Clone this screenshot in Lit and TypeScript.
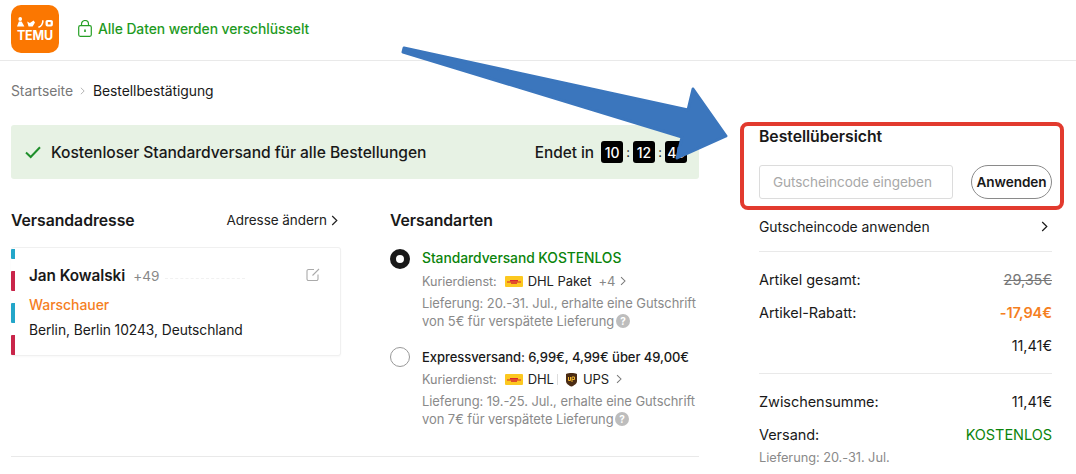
import { LitElement, html, css } from "lit";
import { customElement } from "lit/decorators.js";

const chevron = (w = 7, h = 11) => html`<svg class="chev" width=${w} height=${h} viewBox="0 0 7 11" fill="none" stroke="currentColor" stroke-width="1.2"><path d="M1.2 1 L5.8 5.5 L1.2 10"/></svg>`;

const dhl = html`<svg class="carrier" width="18" height="11" viewBox="0 0 18 11"><rect width="18" height="11" rx="1" fill="#fcc820"/><path d="M2 6 H16 M5 4.6 H13 M6 7.2 H12" stroke="#d8262c" stroke-width="1.1"/></svg>`;
const ups = html`<svg class="carrier" width="13" height="15" viewBox="0 0 13 15"><path d="M1 2 C4 .6 9 .6 12 2 V9 C12 12 9 13.4 6.5 14.6 C4 13.4 1 12 1 9 Z" fill="#4b2c14"/><path d="M3.5 5 V8.5 H5.5 V5 M7 10 V5 H9.5 V7.5 H7" fill="none" stroke="#f2b62c" stroke-width="1"/></svg>`;
const help = html`<svg class="help" width="14" height="14" viewBox="0 0 14 14"><circle cx="7" cy="7" r="7" fill="#bdbdbd"/><text x="7" y="10.6" text-anchor="middle" font-size="10" font-weight="700" font-family="Inter" fill="#fff">?</text></svg>`;

@customElement("app-root")
export class AppRoot extends LitElement {
  static styles = css`
    :host { display: block; width: 1076px; height: 474px; overflow: hidden; position: relative; background: #fff; font-family: Inter, "Liberation Sans", sans-serif; color: #191919; font-size: 14px; letter-spacing: -0.05px; }
    * { box-sizing: border-box; }
    .top { height: 61px; border-bottom: 1px solid #e9e9e9; display: flex; align-items: center; gap: 19px; padding: 0 11px 3px; }
    .logo { width: 48px; height: 48px; flex: none; display: block; }
    .secure { display: flex; align-items: center; gap: 6px; color: #1e9a1e; font-weight: 500; font-size: 13.86px; }
    .crumbs { height: 21px; margin: 19px 0 0 11px; display: flex; align-items: center; font-size: 13.9px; }
    .crumbs .home { color: #777; }
    .crumbs .sep { width: 20px; display: flex; justify-content: center; color: #aaa; }
    .main { display: grid; grid-template-columns: 688px 293px; gap: 60px; padding: 24px 0 0 11px; align-items: start; }
    .banner { height: 54px; background: #e7f2e4; border-radius: 3px; display: flex; align-items: center; padding: 0 12px 0 14px; }
    .banner .check { margin-right: 10px; }
    .banner .msg { font-size: 15.63px; font-weight: 500; flex: 1; }
    .ends { font-size: 15.4px; font-weight: 500; margin-right: 7px; }
    .digit { width: 22px; height: 22px; background: #000; color: #fff; border-radius: 3px; display: flex; align-items: center; justify-content: center; font-size: 14px; font-weight: 500; }
    .colon { width: 10px; text-align: center; font-size: 13px; }
    .cols { display: grid; grid-template-columns: 330px 309px; gap: 49px; margin-top: 29px; }
    .head { height: 24px; display: flex; justify-content: space-between; align-items: center; }
    h2 { margin: 0; font-size: 15.8px; font-weight: 600; }
    .change { display: flex; align-items: center; gap: 4px; font-size: 13.5px; color: #222; margin-right: 3px; }
    .card { margin-top: 15px; height: 109px; display: flex; border: 1px solid #f0f0f0; border-left: 0; border-radius: 3px; box-shadow: 0 1px 2px rgba(0,0,0,.03); }
    .stripes { width: 4px; margin-top: 1px; flex: none; display: flex; flex-direction: column; gap: 12px; }
    .stripes span { display: block; height: 20px; border-radius: 1px 0 0 1px; background: #c9254a; }
    .stripes span.c { background: #23a6c9; }
    .stripes span.s { height: 10px; }
    .info { flex: 1; padding: 15px 20px 0 14px; }
    .name { display: flex; align-items: center; height: 25px; }
    .name b { font-size: 15.3px; font-weight: 600; }
    .name .phone { color: #888; margin-left: 8px; font-size: 13.6px; }
    .name .blur { width: 80px; margin: 6px 0 0 6px; border-bottom: 1px dashed #f1f1f1; }
    .name .edit { margin-left: auto; margin-top: -2px; }
    .street { color: #f5801f; font-weight: 500; font-size: 14px; margin-top: 7px; height: 20px; line-height: 20px; }
    .city { font-size: 13.8px; margin-top: 5px; height: 20px; line-height: 20px; }
    .ship { display: grid; grid-template-columns: 20px 1fr; column-gap: 12px; }
    .ship.first { margin-top: 16px; }
    .ship.second { margin-top: 16px; }
    .radio { width: 20px; height: 20px; border-radius: 50%; border: 1px solid #999; margin-top: 1px; }
    .radio.on { border: 6.5px solid #191919; }
    .title { height: 20px; line-height: 20px; font-size: 13px; font-weight: 500; }
    .title.free { color: #0b840b; font-size: 13.85px; }
    .title.express { margin-top: 1px; }
    .courier { display: flex; align-items: center; height: 20px; margin-top: 3px; font-size: 12.6px; color: #888; white-space: nowrap; }
    .title.express + .courier { margin-top: 2px; }
    .courier .carrier { margin-left: 8px; }
    .courier em { font-style: normal; color: #222; margin-left: 5px; font-size: 13px; }
    .courier .more { margin-left: 7px; font-size: 13px; }
    .courier .chev { margin-left: 5px; color: #777; }
    .courier em + .chev { margin-left: 7px; }
    .courier .bar { width: 1px; height: 11px; background: #ddd; margin-left: 3px; margin-right: -1px; }
    .note { margin-top: 3px; font-size: 12.95px; line-height: 18px; color: #8a8a8a; white-space: nowrap; }
    .help { vertical-align: -2px; margin-left: -2px; }
    .rule { height: 1px; background: #e9e9e9; }
    .ship-rule { margin-top: 28px; }
    .side { padding-top: 2px; }
    .side h2 { height: 20px; line-height: 20px; }
    .coupon { display: flex; justify-content: space-between; margin-top: 18px; }
    .input { width: 194px; height: 34px; border: 1px solid #dcdcdc; border-radius: 3px; display: flex; align-items: center; padding-left: 13px; color: #a8a8a8; font-size: 13.55px; }
    .apply { width: 81px; height: 34px; border: 1px solid #8a8a8a; border-radius: 17px; display: flex; align-items: center; justify-content: center; font-weight: 600; font-size: 13.6px; }
    .row { display: flex; justify-content: space-between; align-items: center; font-size: 14.5px; height: 22px; }
    .row.link { margin-top: 16px; padding-right: 4px; font-size: 13.95px; }
    .rule.a { margin-top: 14px; }
    .row.r1 { margin-top: 16px; }
    .row.r2, .row.r3 { margin-top: 11px; }
    .row.r5 { margin-top: 11px; }
    .strike { color: #777; text-decoration: line-through; }
    .off { color: #f5801f; font-weight: 600; }
    .rule.b { margin-top: 17px; }
    .row.r4 { margin-top: 16px; }
    .green { color: #0b840b; }
    .when { font-size: 12.8px; color: #8a8a8a; margin-top: 2px; height: 22px; line-height: 22px; }
    .overlay { position: absolute; left: 0; top: 0; pointer-events: none; }
  `;

  private logo() {
    return html`<svg class="logo" viewBox="0 0 48 48">
      <rect width="48" height="48" rx="10" fill="#fb7701"/>
      <g fill="#fff" transform="translate(0.5 -2.5) scale(.92 1)">
        <circle cx="9.5" cy="16.5" r="2"/><path d="M6 24 L8 19 H11 L14 24 Z"/>
        <path d="M17 19 L20 20.5 L24 18 L25.5 20 L23 24 H18.5 Z"/>
        <path d="M29 24 C32 23.5 33 21 33.5 17.5 L35 18 C35 21.5 33 24.5 29.5 25.5 Z"/>
        <path d="M37 19 Q37 17.5 39 17.5 H43 Q45 17.5 45 19 V22 Q45 24 43 24 H39 Q37 24 37 22 Z M39.5 19.5 V22 H42.5 V19.5 Z" fill-rule="evenodd"/>
      </g>
      <text x="24" y="34.5" text-anchor="middle" font-family="Inter" font-weight="700" font-size="12.5" textLength="36" fill="#fff">TEMU</text>
    </svg>`;
  }

  render() {
    return html`
      <div class="top">
        ${this.logo()}
        <div class="secure">
          <svg width="14" height="17" viewBox="0 0 14 17" fill="none" stroke="#26a026" stroke-width="1.2"><rect x=".7" y="5.7" width="12.6" height="10.6" rx="1.5"/><path d="M3.5 5.5 V4 a3.5 3.5 0 0 1 7 0 V5.5"/><path d="M7 9.5 V12" stroke-width="1.6"/></svg>
          Alle Daten werden verschlüsselt
        </div>
      </div>
      <div class="crumbs"><span class="home">Startseite</span><span class="sep">${chevron(5, 8)}</span><span>Bestellbestätigung</span></div>
      <div class="main">
        <div>
          <div class="banner">
            <svg class="check" width="16" height="13" viewBox="0 0 16 13" fill="none" stroke="#1f8f2b" stroke-width="2"><path d="M1 6.5 L5.7 11 L15 1.2"/></svg>
            <span class="msg">Kostenloser Standardversand für alle Bestellungen</span>
            <span class="ends">Endet in</span>
            <span class="digit">10</span><span class="colon">:</span><span class="digit">12</span><span class="colon">:</span><span class="digit">45</span>
          </div>
          <div class="cols">
            <section>
              <div class="head"><h2>Versandadresse</h2><span class="change">Adresse ändern ${chevron()}</span></div>
              <div class="card">
                <div class="stripes"><span class="c s"></span><span></span><span class="c"></span><span></span></div>
                <div class="info">
                  <div class="name"><b>Jan Kowalski</b><span class="phone">+49</span><span class="blur"></span>
                    <svg class="edit" width="14" height="14" viewBox="0 0 14 14" fill="none" stroke="#aaa" stroke-width="1.1"><path d="M8 1.5 H2.5 a1.5 1.5 0 0 0 -1.5 1.5 V11 a1.5 1.5 0 0 0 1.5 1.5 H10.5 a1.5 1.5 0 0 0 1.5 -1.5 V6.5"/><path d="M6.5 7.5 L13 1"/></svg>
                  </div>
                  <div class="street">Warschauer</div>
                  <div class="city">Berlin, Berlin 10243, Deutschland</div>
                </div>
              </div>
            </section>
            <section>
              <div class="head"><h2>Versandarten</h2></div>
              <div class="ship first">
                <div class="radio on"></div>
                <div>
                  <div class="title free">Standardversand KOSTENLOS</div>
                  <div class="courier">Kurierdienst: ${dhl}<em>DHL Paket</em><span class="more">+4</span>${chevron(6, 10)}</div>
                  <div class="note">Lieferung: 20.-31. Jul., erhalte eine Gutschrift<br />von 5€ für verspätete Lieferung ${help}</div>
                </div>
              </div>
              <div class="ship second">
                <div class="radio"></div>
                <div>
                  <div class="title express">Expressversand: 6,99€, 4,99€ über 49,00€</div>
                  <div class="courier">Kurierdienst: ${dhl}<em>DHL</em><span class="bar"></span>${ups}<em>UPS</em>${chevron(6, 10)}</div>
                  <div class="note">Lieferung: 19.-25. Jul., erhalte eine Gutschrift<br />von 7€ für verspätete Lieferung ${help}</div>
                </div>
              </div>
            </section>
          </div>
          <div class="rule ship-rule"></div>
        </div>
        <aside class="side">
          <h2>Bestellübersicht</h2>
          <div class="coupon"><div class="input">Gutscheincode eingeben</div><div class="apply">Anwenden</div></div>
          <div class="row link"><span>Gutscheincode anwenden</span>${chevron()}</div>
          <div class="rule a"></div>
          <div class="row r1"><span>Artikel gesamt:</span><span class="strike">29,35€</span></div>
          <div class="row r2"><span>Artikel-Rabatt:</span><span class="off">-17,94€</span></div>
          <div class="row r3"><span></span><span>11,41€</span></div>
          <div class="rule b"></div>
          <div class="row r4"><span>Zwischensumme:</span><span>11,41€</span></div>
          <div class="row r5"><span>Versand:</span><span class="green">KOSTENLOS</span></div>
          <div class="when">Lieferung: 20.-31. Jul.</div>
        </aside>
      </div>
      <svg class="overlay" width="1076" height="474" viewBox="0 0 1076 474">
        <rect x="742" y="124" width="320" height="84" rx="6" fill="none" stroke="#e23a2e" stroke-width="4"/>
        <path d="M404 48 L688 110 L693 89 L726 136 L677 158 L682 137 L403 52 Z" fill="#3b76bd" stroke="#3b76bd" stroke-width="3" stroke-linejoin="round"/>
      </svg>
    `;
  }
}
